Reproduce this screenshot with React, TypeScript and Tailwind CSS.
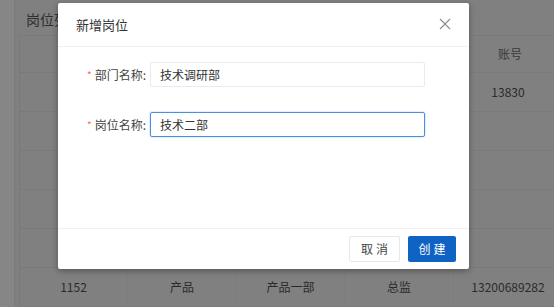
import React from "react";

const rows = [
  ["", "", "", "", "13830"],
  ["", "", "", "", ""],
  ["", "", "", "", ""],
  ["", "", "", "", ""],
  ["", "", "", "", ""],
  ["1152", "产品", "产品一部", "总监", "13200689282"],
];

export default function App() {
  return (
    <div
      className="relative w-[554px] h-[307px] overflow-hidden bg-[#808080]"
      style={{ fontFamily: '"Noto Sans CJK SC", "Noto Sans", sans-serif' }}
    >
      {/* underlying page */}
      <div className="flex h-full">
        <div className="w-[15px] bg-[#868686] border-r border-[#7b7b7b]" />
        <div className="flex-1 pl-[4px] flex flex-col">
          <div className="h-[36px] pl-[7px] pt-[9px] text-[14px] leading-[20px] text-[#2e2e2e]">岗位列表</div>
          <div className="flex flex-col border-t border-l border-[#7a7a7a]">
            <div className="grid grid-cols-[108px_109px_108px_109px_100px] h-[37px] border-b border-[#7a7a7a] text-[12px] text-[#3a3a3a]">
              <div className="border-r border-[#7d7d7d]" />
              <div className="border-r border-[#7d7d7d]" />
              <div className="border-r border-[#7d7d7d]" />
              <div className="border-r border-[#7d7d7d]" />
              <div className="flex items-center justify-center pl-[12px]">账号</div>
            </div>
            {rows.map((r, i) => (
              <div
                key={i}
                className="grid grid-cols-[108px_109px_108px_109px_100px] h-[39px] border-b border-[#7a7a7a] text-[12px] text-[#2a2a2a]"
              >
                <div className="flex items-center justify-center border-r border-[#7d7d7d]">{r[0]}</div>
                <div className="flex items-center justify-center border-r border-[#7d7d7d]">{r[1]}</div>
                <div className="flex items-center justify-center border-r border-[#7d7d7d]">{r[2]}</div>
                <div className="flex items-center justify-center border-r border-[#7d7d7d]">{r[3]}</div>
                <div className="flex items-center justify-center pl-[8px]">{r[4]}</div>
              </div>
            ))}
          </div>
        </div>
      </div>

      {/* modal */}
      <div className="absolute left-[58px] top-[3px] w-[411px] h-[266px] bg-white rounded-[2px] shadow-[0_2px_6px_rgba(0,0,0,0.35)] flex flex-col">
        <div className="h-[44px] flex items-center justify-between pl-[18px] pr-[18px] border-b border-[#f0f0f0]">
          <span className="text-[13px] text-[#333] leading-none">新增岗位</span>
          <svg width="12" height="12" viewBox="0 0 12 12" className="mt-[-2px]">
            <path d="M1 1L11 11M11 1L1 11" stroke="#8c8c8c" strokeWidth="1.1" fill="none" />
          </svg>
        </div>
        <div className="flex-1 flex flex-col gap-[25px] pt-[15px]">
          <div className="flex items-center">
            <div className="w-[92px] flex justify-end items-center pr-[4px] text-[12px] text-[#444]">
              <span className="text-[#f56c6c] mr-[3px] text-[10px]">*</span>
              <span>部门名称:</span>
            </div>
            <div className="w-[275px] h-[25px] border border-[#ebebeb] rounded-[2px] flex items-center pl-[9px] text-[12px] text-[#333]">
              技术调研部
            </div>
          </div>
          <div className="flex items-center">
            <div className="w-[92px] flex justify-end items-center pr-[4px] text-[12px] text-[#444]">
              <span className="text-[#f56c6c] mr-[3px] text-[10px]">*</span>
              <span>岗位名称:</span>
            </div>
            <div className="w-[275px] h-[25px] border border-[#4a90e2] rounded-[2px] flex items-center pl-[9px] text-[12px] text-[#333] shadow-[0_0_0_1px_rgba(74,144,226,0.15)]">
              技术二部
            </div>
          </div>
        </div>
        <div className="h-[41px] border-t border-[#f0f0f0] flex items-center justify-end gap-[8px] pr-[13px]">
          <div className="w-[51px] h-[26px] border border-[#e8e8e8] rounded-[2px] flex items-center justify-center text-[12px] text-[#444] tracking-[3px] pl-[3px]">
            取消
          </div>
          <div className="w-[48px] h-[26px] bg-[#0f63c2] rounded-[2px] flex items-center justify-center text-[12px] text-white tracking-[3px] pl-[3px]">
            创建
          </div>
        </div>
      </div>
    </div>
  );
}
